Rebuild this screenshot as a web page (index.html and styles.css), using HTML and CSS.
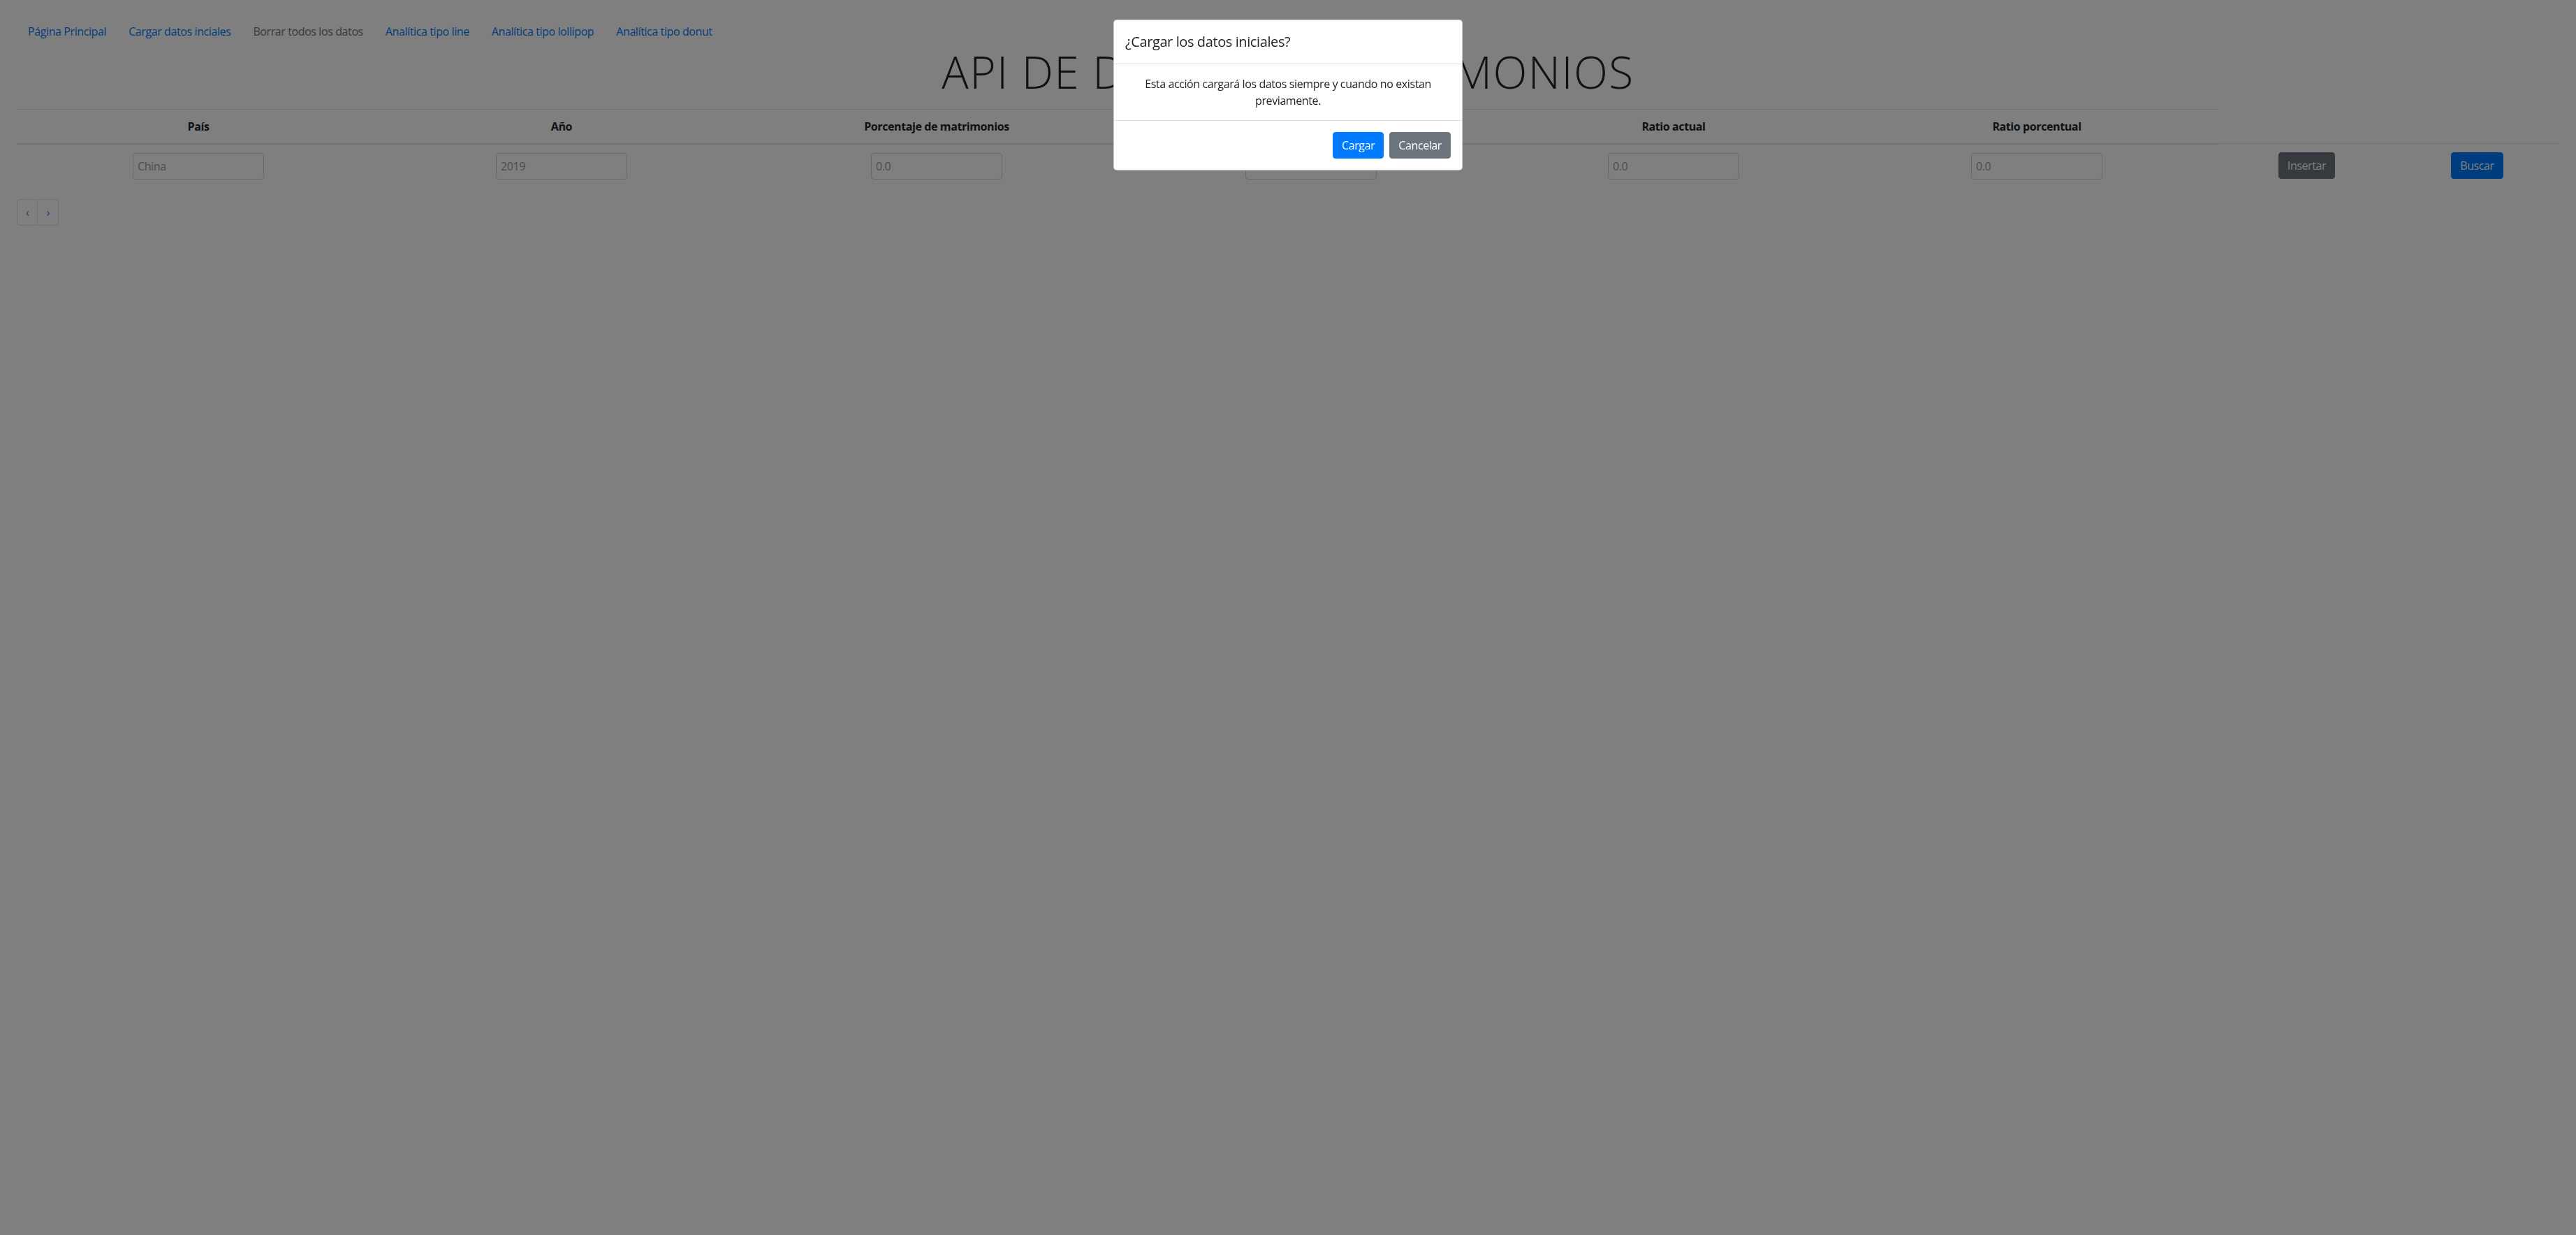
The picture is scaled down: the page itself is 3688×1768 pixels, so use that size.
FILE: index.html
```html
<!DOCTYPE html>
<html lang="es">
<head>
<meta charset="utf-8">
<title>API de datos de matrimonios</title>
<link rel="stylesheet" href="styles.css">
</head>
<body>
<div class="page">
  <ul class="nav">
    <li><a class="nav-link" href="#">Página Principal</a></li>
    <li><a class="nav-link" href="#">Cargar datos inciales</a></li>
    <li><a class="nav-link muted" href="#">Borrar todos los datos</a></li>
    <li><a class="nav-link" href="#">Analítica tipo line</a></li>
    <li><a class="nav-link" href="#">Analítica tipo lollipop</a></li>
    <li><a class="nav-link" href="#">Analítica tipo donut</a></li>
  </ul>

  <h1 class="title">API DE DATOS DE MATRIMONIOS</h1>

  <table class="data-table">
    <colgroup>
      <col class="c-std">
      <col class="c-std">
      <col class="c-wide">
      <col class="c-mid">
      <col class="c-std">
      <col class="c-std">
      <col class="c-btn1">
      <col class="c-btn2">
    </colgroup>
    <thead>
      <tr>
        <th>País</th>
        <th>Año</th>
        <th>Porcentaje de matrimonios</th>
        <th>Tasa de matrimonios</th>
        <th>Ratio actual</th>
        <th>Ratio porcentual</th>
      </tr>
    </thead>
    <tbody>
      <tr>
        <td><input class="field" type="text" placeholder="China"></td>
        <td><input class="field" type="text" placeholder="2019"></td>
        <td><input class="field" type="text" placeholder="0.0"></td>
        <td><input class="field" type="text" placeholder="0.0"></td>
        <td><input class="field" type="text" placeholder="0.0"></td>
        <td><input class="field" type="text" placeholder="0.0"></td>
        <td><button class="btn btn-secondary" type="button">Insertar</button></td>
        <td><button class="btn btn-primary" type="button">Buscar</button></td>
      </tr>
    </tbody>
  </table>

  <ul class="pagination">
    <li><a class="page-link disabled" href="#">‹</a></li>
    <li><a class="page-link" href="#">›</a></li>
  </ul>
</div>

<div class="backdrop"></div>
<div class="modal">
  <div class="modal-content">
    <div class="modal-header">
      <h5 class="modal-title">¿Cargar los datos iniciales?</h5>
    </div>
    <div class="modal-body">Esta acción cargará los datos siempre y cuando no existan previamente.</div>
    <div class="modal-footer">
      <button class="btn btn-primary" type="button">Cargar</button>
      <button class="btn btn-secondary" type="button">Cancelar</button>
    </div>
  </div>
</div>
</body>
</html>
```

FILE: styles.css
```css
* { box-sizing: border-box; }

html, body {
  margin: 0;
  padding: 0;
  background: #fff;
}

body {
  font-family: "Open Sans", "Noto Sans", sans-serif;
  font-size: 16px;
  line-height: 1.5;
  letter-spacing: -0.4px;
  color: #212529;
}

.page {
  padding: 25px 24px 0 24px;
}

.nav {
  display: flex;
  list-style: none;
  margin: 0;
  padding: 0;
}

.nav-link {
  display: block;
  padding: 8px 16px;
  color: #007bff;
  text-decoration: none;
}

.nav-link.muted { color: #6c757d; }

.title {
  margin: 0 0 14px 0;
  text-align: center;
  font-size: 64px;
  font-weight: 300;
  line-height: 1.2;
  letter-spacing: 1.45px;
  color: #212529;
}

.data-table {
  width: 100%;
  border-collapse: collapse;
  table-layout: fixed;
  margin-bottom: 16px;
}

.c-std { width: 520px; }
.c-wide { width: 554px; }
.c-mid { width: 518px; }
.c-btn1 { width: 253px; }
.c-btn2 { width: 235px; }

.data-table th {
  padding: 12px;
  border-top: 1px solid #dee2e6;
  border-bottom: 2px solid #dee2e6;
  text-align: center;
  vertical-align: bottom;
  font-weight: 700;
}

.data-table td {
  padding: 12px;
  border-top: 1px solid #dee2e6;
  text-align: center;
  vertical-align: top;
}

.field {
  width: 188px;
  height: 38px;
  padding: 6px;
  border: 1px solid #ced4da;
  border-radius: 4px;
  font-family: inherit;
  font-size: 16px;
  letter-spacing: inherit;
  color: #495057;
  background: #fff;
}

.field::placeholder { color: #9a9a9a; }

.btn {
  display: inline-block;
  padding: 6px 12px;
  font-family: inherit;
  font-size: 16px;
  letter-spacing: inherit;
  line-height: 1.5;
  border: 1px solid transparent;
  border-radius: 4px;
  color: #fff;
  cursor: pointer;
}

.btn-primary { background: #007bff; border-color: #007bff; }
.btn-secondary { background: #6c757d; border-color: #6c757d; }

.pagination {
  display: flex;
  list-style: none;
  margin: 0;
  padding: 0;
}

.page-link {
  display: block;
  padding: 8px 12px;
  line-height: 1.25;
  border: 1px solid #dee2e6;
  color: #007bff;
  text-decoration: none;
  background: #fff;
}

.pagination li + li .page-link { margin-left: -1px; }
.pagination li:first-child .page-link { border-radius: 4px 0 0 4px; }
.pagination li:last-child .page-link { border-radius: 0 4px 4px 0; }
.page-link.disabled { color: #6c757d; }

.backdrop {
  position: fixed;
  inset: 0;
  background: rgba(0, 0, 0, 0.5);
  z-index: 1040;
}

.modal {
  position: fixed;
  inset: 0;
  z-index: 1050;
}

.modal-content {
  width: 500px;
  margin: 28px auto;
  background: #fff;
  border: 1px solid rgba(0, 0, 0, 0.2);
  border-radius: 5px;
  display: flex;
  flex-direction: column;
}

.modal-header {
  padding: 16px;
  border-bottom: 1px solid #dee2e6;
}

.modal-title {
  margin: 0;
  font-size: 20px;
  font-weight: 500;
  line-height: 1.5;
}

.modal-body {
  padding: 16px;
  text-align: center;
}

.modal-footer {
  display: flex;
  justify-content: flex-end;
  align-items: center;
  padding: 12px;
  border-top: 1px solid #dee2e6;
}

.modal-footer .btn { margin: 4px; }
```
